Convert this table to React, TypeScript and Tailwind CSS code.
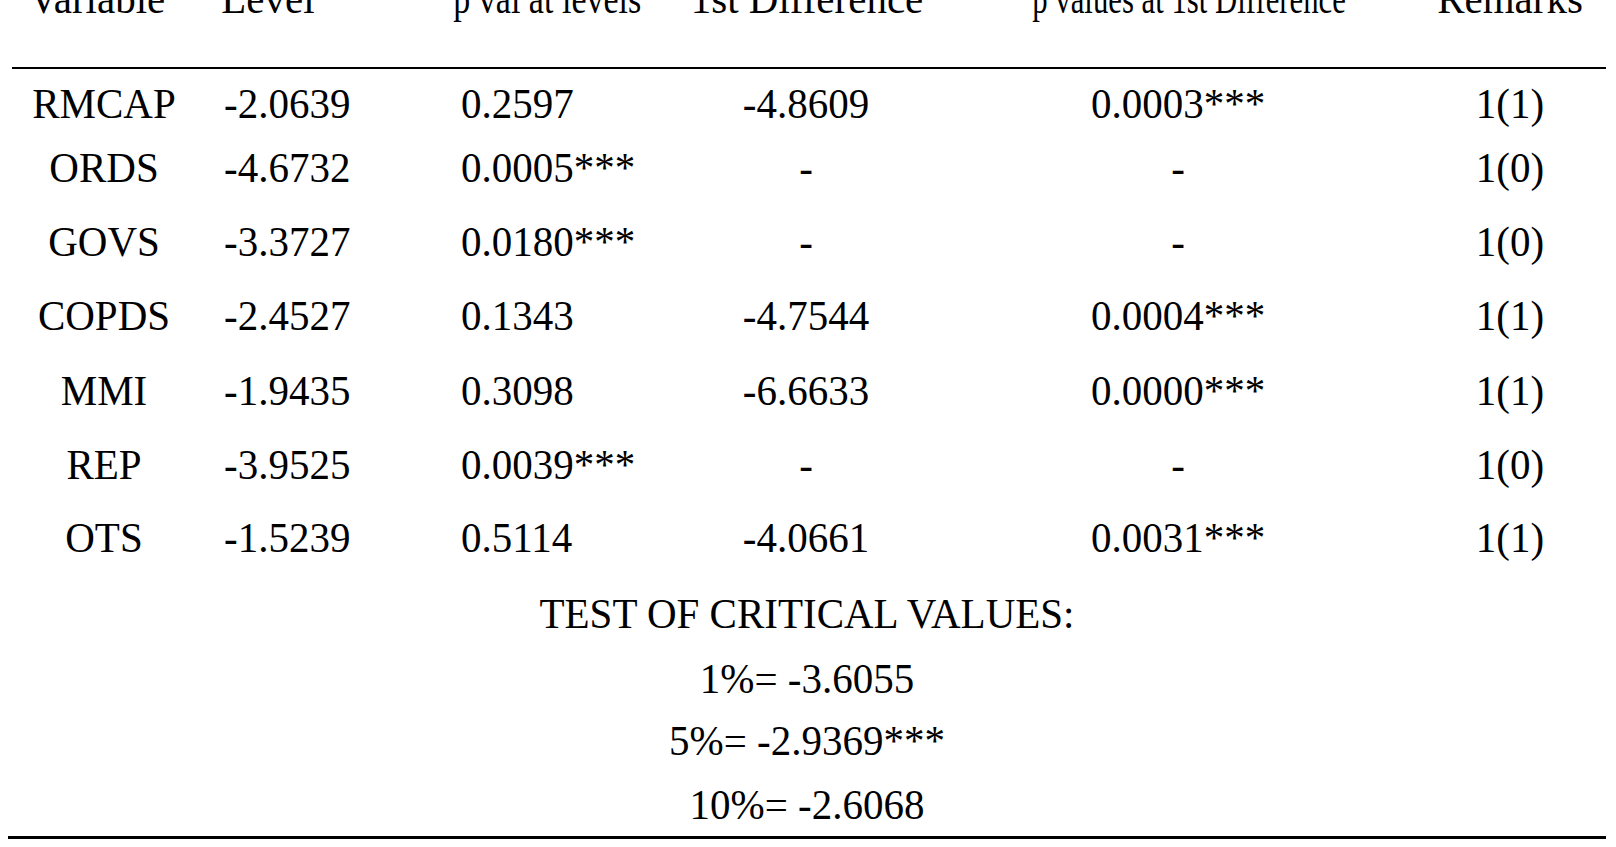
import React from 'react';

const rows = [
  { v: 'RMCAP', lvl: '-2.0639', p: '0.2597', d: '-4.8609', pd: '0.0003***', r: '1(1)', mt: 'mt-[14px]' },
  { v: 'ORDS', lvl: '-4.6732', p: '0.0005***', d: '-', pd: '-', r: '1(0)', mt: 'mt-[24px]' },
  { v: 'GOVS', lvl: '-3.3727', p: '0.0180***', d: '-', pd: '-', r: '1(0)', mt: 'mt-[34px]' },
  { v: 'COPDS', lvl: '-2.4527', p: '0.1343', d: '-4.7544', pd: '0.0004***', r: '1(1)', mt: 'mt-[34px]' },
  { v: 'MMI', lvl: '-1.9435', p: '0.3098', d: '-6.6633', pd: '0.0000***', r: '1(1)', mt: 'mt-[35px]' },
  { v: 'REP', lvl: '-3.9525', p: '0.0039***', d: '-', pd: '-', r: '1(0)', mt: 'mt-[34px]' },
  { v: 'OTS', lvl: '-1.5239', p: '0.5114', d: '-4.0661', pd: '0.0031***', r: '1(1)', mt: 'mt-[33px]' },
];

const critical = [
  { t: 'TEST OF CRITICAL VALUES:', mt: 'mt-[36px]' },
  { t: '1%= -3.6055', mt: 'mt-[25px]' },
  { t: '5%= -2.9369***', mt: 'mt-[22px]' },
  { t: '10%= -2.6068', mt: 'mt-[24px]' },
];

const cell = 'flex items-center whitespace-nowrap';

export default function App() {
  return (
    <div className="min-h-screen bg-white text-black font-['Liberation_Serif','Times_New_Roman',serif] text-[41px] leading-[40px] overflow-hidden">
      <div className="w-[1598px] ml-[8px]">
        {/* header row, top half clipped by the page edge */}
        <div className="flex h-10 -mt-[22px] scale-y-105">
          <div className={`${cell} justify-center w-[178px]`}>Variable</div>
          <div className={`${cell} justify-center w-[164px]`}>Level</div>
          <div className={`${cell} justify-center w-[394px]`}>
            <span className="inline-block scale-x-[0.83]">p val at levels</span>
          </div>
          <div className={`${cell} justify-center w-[126px]`}>1st Difference</div>
          <div className={`${cell} justify-center w-[638px]`}>
            <span className="inline-block scale-x-[0.75]">p values at 1st Difference</span>
          </div>
          <div className={`${cell} justify-center w-[4px]`}>Remarks</div>
        </div>

        <div className="mt-[49px] ml-[4px] h-[2px] bg-black" />

        {rows.map((row) => (
          <div key={row.v} className={`grid grid-cols-[192px_240px_240px_252px_492px_172px] h-10 scale-y-105 ${row.mt}`}>
            <div className={`${cell} justify-center`}>{row.v}</div>
            <div className={`${cell} pl-[24px]`}>{row.lvl}</div>
            <div className={`${cell} pl-[21px]`}>{row.p}</div>
            <div className={`${cell} justify-center`}>{row.d}</div>
            <div className={`${cell} justify-center`}>{row.pd}</div>
            <div className={`${cell} justify-center`}>{row.r}</div>
          </div>
        ))}

        {critical.map((c) => (
          <div key={c.t} className={`${cell} justify-center h-10 scale-y-105 ${c.mt}`}>
            {c.t}
          </div>
        ))}

        <div className="mt-[12px] h-[3px] bg-black" />
      </div>
    </div>
  );
}
